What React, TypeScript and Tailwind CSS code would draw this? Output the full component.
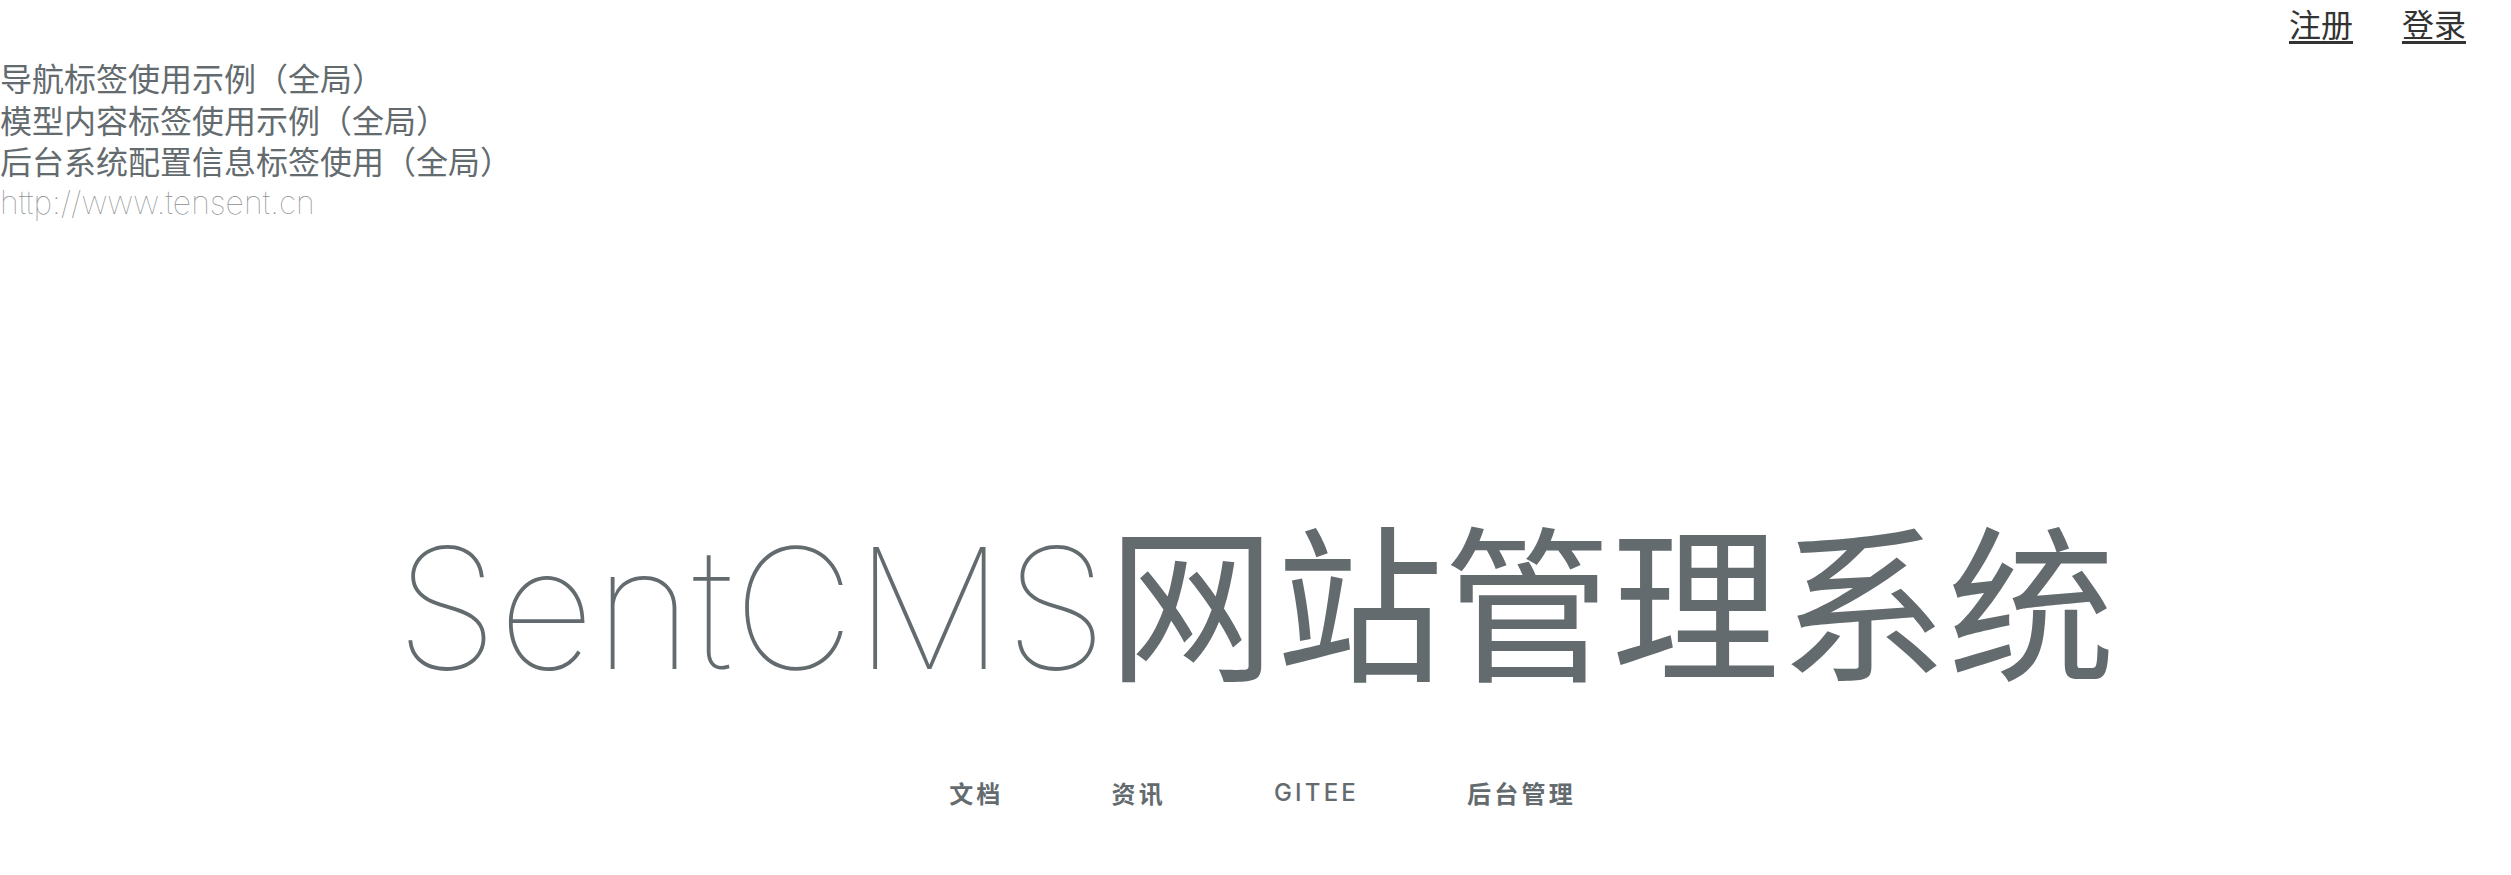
import React from "react";

export default function App() {
  return (
    <div className="w-full min-h-[875px] bg-white text-[#636b6f] font-['Inter','Noto_Sans_CJK_SC',sans-serif]">
      <div className="flex h-[57px] items-start justify-end pr-[45px] pt-[2px]">
        <div className="flex gap-[49px] text-[32px] leading-[42px] text-[#333] font-['Noto_Sans_CJK_SC',sans-serif]">
          <a href="#" className="underline underline-offset-[4px]">注册</a>
          <a href="#" className="underline underline-offset-[4px]">登录</a>
        </div>
      </div>

      <div className="flex flex-col text-[32px] leading-[41.5px]">
        <a href="#" className="w-fit font-['Noto_Sans_CJK_SC',sans-serif]">导航标签使用示例（全局）</a>
        <a href="#" className="w-fit font-['Noto_Sans_CJK_SC',sans-serif]">模型内容标签使用示例（全局）</a>
        <a href="#" className="w-fit font-['Noto_Sans_CJK_SC',sans-serif]">后台系统配置信息标签使用（全局）</a>
        <a href="#" className="w-fit font-thin text-[#8a9094] font-['Inter',sans-serif]">http://www.tensent.cn</a>
      </div>

      <div className="mt-[289px] flex flex-col items-center">
        <div className="text-[168px] leading-[168px] whitespace-nowrap">
          <span className="font-thin font-['Inter',sans-serif]">SentCMS</span>
          <span className="font-normal font-['Noto_Sans_CJK_SC',sans-serif]">网站管理系统</span>
        </div>
        <nav className="mt-[85px] ml-[14px] flex gap-[8px] text-[24px] leading-[32px] font-semibold uppercase tracking-[3.2px]">
          <a href="#" className="px-[50px] font-['Noto_Sans_CJK_SC',sans-serif]">文档</a>
          <a href="#" className="px-[50px] font-['Noto_Sans_CJK_SC',sans-serif]">资讯</a>
          <a href="#" className="px-[50px] font-medium font-['Inter',sans-serif]">GITEE</a>
          <a href="#" className="px-[50px] font-['Noto_Sans_CJK_SC',sans-serif]">后台管理</a>
        </nav>
      </div>
    </div>
  );
}
